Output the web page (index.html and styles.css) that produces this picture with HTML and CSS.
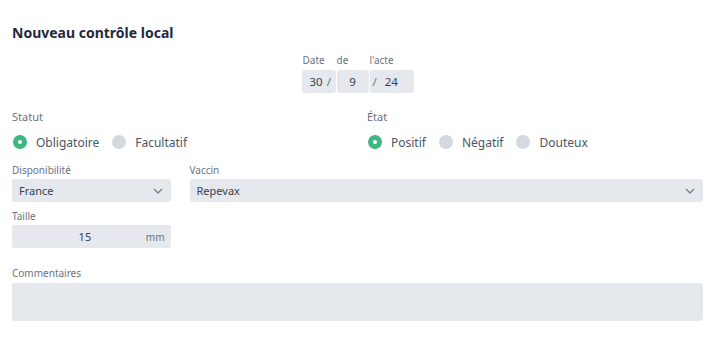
FILE: index.html
```html
<!DOCTYPE html>
<html lang="fr">
<head>
    <meta charset="UTF-8">
    <title>Nouveau contrôle local</title>
    <link rel="stylesheet" href="styles.css">
</head>
<body>
    <div class="page">
        <h1 class="title">Nouveau contrôle local</h1>

        <!-- Date de l'acte -->
        <div class="date-block">
            <div class="date-labels">
                <span class="lbl-day">Date</span>
                <span class="lbl-month">de</span>
                <span class="lbl-year">l'acte</span>
            </div>
            <div class="date-boxes">
                <div class="date-part day">30<span class="sep">/</span></div>
                <div class="date-part month">9</div>
                <div class="date-part year"><span class="sep">/</span>24</div>
            </div>
        </div>

        <!-- Statut / Etat -->
        <div class="grid radios-row">
            <div class="span-2">
                <div class="group-label">Statut</div>
                <div class="radio-list">
                    <label class="radio"><span class="dot checked"></span>Obligatoire</label>
                    <label class="radio"><span class="dot"></span>Facultatif</label>
                </div>
            </div>
            <div class="span-2">
                <div class="group-label">État</div>
                <div class="radio-list">
                    <label class="radio"><span class="dot checked"></span>Positif</label>
                    <label class="radio"><span class="dot"></span>Négatif</label>
                    <label class="radio"><span class="dot"></span>Douteux</label>
                </div>
            </div>
        </div>

        <!-- Disponibilite / Vaccin -->
        <div class="grid selects-row">
            <div class="field">
                <div class="field-label">Disponibilité</div>
                <div class="select">
                    <span>France</span>
                    <svg class="chevron" width="10" height="6" viewBox="0 0 10 6"><path d="M1 1l4 4 4-4" fill="none" stroke="#6b7280" stroke-width="1.1"/></svg>
                </div>
            </div>
            <div class="field span-3">
                <div class="field-label">Vaccin</div>
                <div class="select">
                    <span>Repevax</span>
                    <svg class="chevron" width="10" height="6" viewBox="0 0 10 6"><path d="M1 1l4 4 4-4" fill="none" stroke="#6b7280" stroke-width="1.1"/></svg>
                </div>
            </div>
        </div>

        <!-- Taille -->
        <div class="grid size-row">
            <div class="field">
                <div class="field-label">Taille</div>
                <div class="input-unit">
                    <span class="value">15</span>
                    <span class="unit">mm</span>
                </div>
            </div>
        </div>

        <!-- Commentaires -->
        <div class="field comments">
            <div class="field-label">Commentaires</div>
            <div class="textarea"></div>
        </div>
    </div>
</body>
</html>
```

FILE: styles.css
```css
/* General styles */
* {
    margin: 0;
    padding: 0;
    box-sizing: border-box;
}

body {
    font-family: "Noto Sans", "Open Sans", sans-serif;
    background-color: #ffffff;
    color: #374151;
}

.page {
    padding: 23px 19px 0 12px;
}

.title {
    font-size: 14px;
    font-weight: 700;
    line-height: 20px;
    color: #1f2a3c;
}

/* Date block */
.date-block {
    display: flex;
    flex-direction: column;
    align-items: center;
    margin-top: 11px;
}

.date-labels {
    display: flex;
    width: 112px;
    font-size: 10px;
    line-height: 12px;
    color: #6b7280;
}

.lbl-day {
    width: 35px;
    padding-left: 1px;
}

.lbl-month {
    width: 33px;
}

.date-boxes {
    display: flex;
    gap: 1px;
    margin-top: 4px;
    font-size: 11.5px;
    color: #374151;
}

.date-part {
    height: 23px;
    line-height: 23px;
    background-color: #e5e8ed;
    border-radius: 3px;
}

.date-part.day {
    width: 34px;
    padding-left: 8px;
}

.date-part.day .sep {
    margin-left: 4px;
}

.date-part.month {
    width: 32px;
    text-align: center;
}

.date-part.year {
    width: 44px;
    padding-left: 3px;
}

.date-part.year .sep {
    margin-right: 8px;
}

.sep {
    color: #6b7280;
}

/* Grid rows */
.grid {
    display: grid;
    grid-template-columns: repeat(4, 1fr);
    column-gap: 19px;
}

.span-2 {
    grid-column: span 2;
}

.span-3 {
    grid-column: span 3;
}

.radios-row {
    margin-top: 17px;
}

.group-label {
    font-size: 11px;
    line-height: 14px;
    color: #6b7280;
}

.radio-list {
    display: flex;
    gap: 12px;
    margin-top: 9px;
    height: 18px;
    align-items: center;
}

.radio {
    display: flex;
    align-items: center;
    gap: 9px;
    font-size: 12px;
    color: #4b5563;
}

.dot {
    width: 14px;
    height: 14px;
    margin-left: 1px;
    border-radius: 50%;
    background-color: #d5d9df;
}

.dot.checked {
    background-color: #3fb783;
    position: relative;
}

.dot.checked::after {
    content: "";
    position: absolute;
    top: 5px;
    left: 5px;
    width: 4px;
    height: 4px;
    border-radius: 50%;
    background-color: #ffffff;
}

/* Fields */
.selects-row {
    margin-top: 13px;
}

.size-row {
    margin-top: 8px;
}

.field-label {
    font-size: 10px;
    line-height: 12px;
    color: #6b7280;
    margin-bottom: 3px;
}

.select,
.input-unit {
    height: 23px;
    background-color: #e5e8ed;
    border-radius: 3px;
    display: flex;
    align-items: center;
    font-size: 11px;
    color: #374151;
}

.select {
    justify-content: space-between;
    padding: 0 8px 0 7px;
}

.input-unit .value {
    flex: 1;
    text-align: center;
    padding-left: 12px;
}

.unit {
    padding-right: 6px;
    font-size: 10px;
    color: #6b7280;
}

.comments {
    margin-top: 19px;
}

.comments .field-label {
    margin-bottom: 4px;
}

.textarea {
    height: 38px;
    background-color: #e5e8ed;
    border-radius: 3px;
}
```
